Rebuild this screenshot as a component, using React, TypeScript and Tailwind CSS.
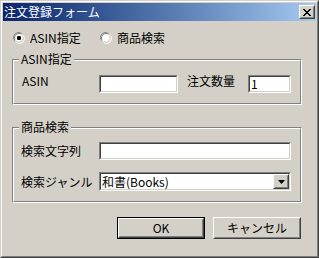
import type { ReactNode } from "react";

const font = "font-['Noto_Sans_CJK_JP','Noto_Sans',sans-serif]";

function Radio({ checked }: { checked?: boolean }) {
  return (
    <svg width="12" height="12" viewBox="0 0 12 12" className="shrink-0">
      <path d="M1.5 8.5 A5 5 0 0 1 8.5 1.5" fill="none" stroke="#808080" strokeWidth="1" />
      <path d="M2.5 8 A4 4 0 0 1 8 2.5" fill="none" stroke="#404040" strokeWidth="1" />
      <circle cx="6" cy="6" r="4" fill="#fff" />
      <path d="M10.5 3.5 A5 5 0 0 1 3.5 10.5" fill="none" stroke="#fff" strokeWidth="1" />
      <path d="M9.5 4 A4 4 0 0 1 4 9.5" fill="none" stroke="#d4d0c8" strokeWidth="1" />
      {checked && <rect x="4" y="4" width="4" height="4" rx="1.2" fill="#000" />}
    </svg>
  );
}

function Sunken({ className, children }: { className: string; children?: ReactNode }) {
  return (
    <div className={`border border-t-[#808080] border-l-[#808080] border-r-white border-b-white ${className}`}>
      <div className="h-full border border-t-[#404040] border-l-[#404040] border-r-[#d4d0c8] border-b-[#d4d0c8] bg-white flex items-center">
        {children}
      </div>
    </div>
  );
}

function Raised({ className, children }: { className: string; children?: ReactNode }) {
  return (
    <div className={`border border-t-white border-l-white border-r-[#404040] border-b-[#404040] ${className}`}>
      <div className="h-full border border-t-[#d4d0c8] border-l-[#d4d0c8] border-r-[#808080] border-b-[#808080] bg-[#d4d0c8] flex items-center justify-center">
        {children}
      </div>
    </div>
  );
}

function Group({ title, className, children }: { title: string; className: string; children: ReactNode }) {
  return (
    <div className={`relative w-[290px] border border-t-[#808080] border-l-[#808080] border-r-white border-b-white ${className}`}>
      <div className="h-full border border-t-white border-l-white border-r-[#808080] border-b-[#808080]">{children}</div>
      <span className="absolute left-[6px] top-[-8px] px-[2px] bg-[#d4d0c8] leading-[14px]">{title}</span>
    </div>
  );
}

export default function App() {
  return (
    <div
      className={`w-[319px] h-[258px] border border-t-[#d4d0c8] border-l-[#d4d0c8] border-r-[#404040] border-b-[#404040] bg-[#d4d0c8] text-[12px] leading-[14px] text-black ${font}`}
    >
      <div className="h-full border border-t-white border-l-white border-r-[#808080] border-b-[#808080] p-px flex flex-col">
        <div className="h-[18px] flex items-center bg-gradient-to-r from-[#0a246a] to-[#a6caf0] pl-[1px]">
          <span className="text-white flex-1">注文登録フォーム</span>
          <Raised className="w-[16px] h-[14px] mr-[1px]">
            <svg width="8" height="7" viewBox="0 0 8 7" shapeRendering="crispEdges">
              <path
                d="M0 0h2v1H0zM6 0h2v1H6zM1 1h2v1H1zM5 1h2v1H5zM2 2h4v1H2zM3 3h2v1H3zM2 4h4v1H2zM1 5h2v1H1zM5 5h2v1H5zM0 6h2v1H0zM6 6h2v1H6z"
                fill="#000"
              />
            </svg>
          </Raised>
        </div>

        <div className="flex-1 pl-[9px]">
          <div className="mt-[11px] ml-px h-[12px] flex items-center">
            <div className="w-[87px] flex items-center gap-[5px]">
              <Radio checked />
              <span>ASIN指定</span>
            </div>
            <div className="flex items-center gap-[5px]">
              <Radio />
              <span>商品検索</span>
            </div>
          </div>

          <Group title="ASIN指定" className="mt-[15px] h-[46px]">
            <div className="flex items-start pt-[13px] pl-[8px]">
              <span className="w-[77px]">ASIN</span>
              <Sunken className="mt-px w-[79px] h-[18px]" />
              <span className="ml-[9px] w-[61px]">注文数量</span>
              <Sunken className="mt-px w-[43px] h-[18px]">
                <span className="pl-px">1</span>
              </Sunken>
            </div>
          </Group>

          <Group title="商品検索" className="mt-[22px] h-[76px]">
            <div className="flex flex-col pt-[13px] pl-[7px]">
              <div className="flex items-center">
                <span className="w-[78px]">検索文字列</span>
                <Sunken className="w-[192px] h-[18px]" />
              </div>
              <div className="flex items-center mt-[12px]">
                <span className="w-[78px]">検索ジャンル</span>
                <Sunken className="w-[192px] h-[19px]">
                  <span className="flex-1 pl-[1px]">和書(Books)</span>
                  <Raised className="w-[16px] h-full">
                    <svg width="7" height="4" viewBox="0 0 7 4">
                      <path d="M0 0h7L3.5 4z" fill="#000" />
                    </svg>
                  </Raised>
                </Sunken>
              </div>
            </div>
          </Group>

          <div className="mt-[14px] w-[290px] pr-px flex justify-end gap-[8px]">
            <div className="w-[88px] h-[22px] border border-black">
              <Raised className="h-full">
                <span>OK</span>
              </Raised>
            </div>
            <Raised className="w-[88px] h-[22px]">
              <span>キャンセル</span>
            </Raised>
          </div>
        </div>
      </div>
    </div>
  );
}
